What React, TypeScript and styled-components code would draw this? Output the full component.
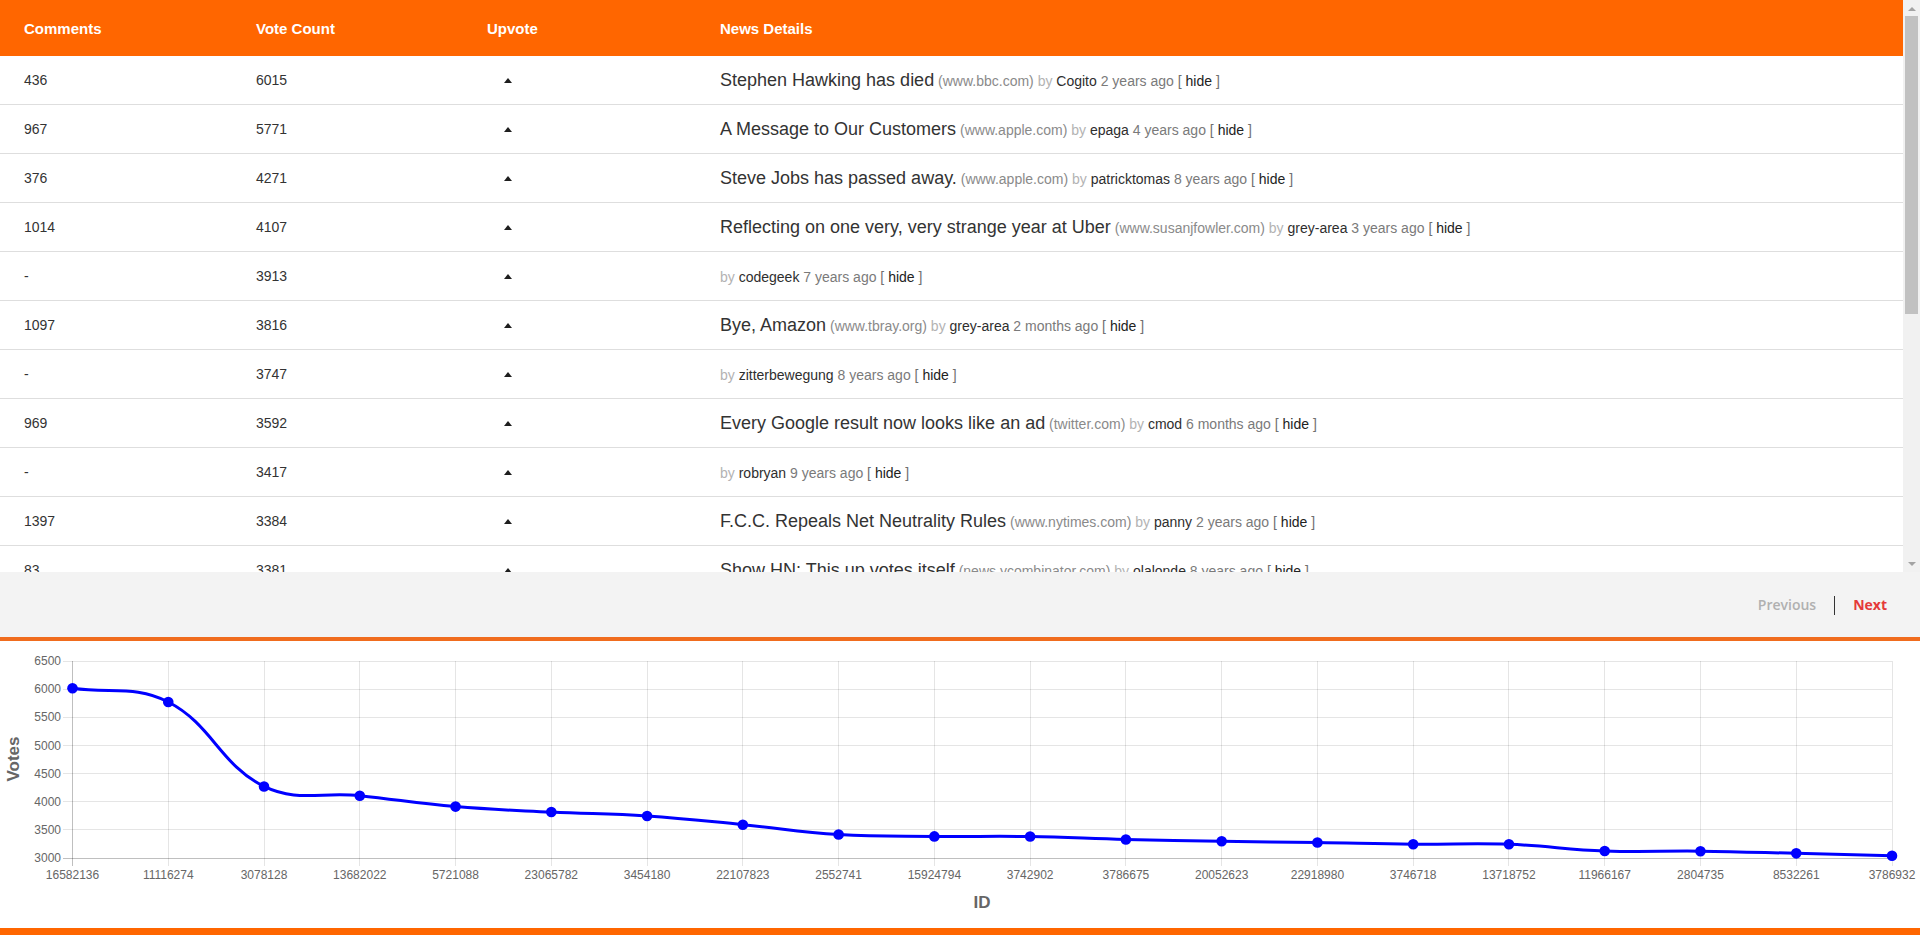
import React, { useState } from "react";
import styled, { createGlobalStyle } from "styled-components";

const GlobalStyle = createGlobalStyle`
  html, body { margin: 0; padding: 0; background: #ffffff; }
  body {
    font-family: "Liberation Sans", Arial, Helvetica, sans-serif;
    overflow: hidden;
  }
  * { box-sizing: border-box; }
`;

type Story = {
  id: number;
  comments: string;
  votes: number;
  title?: string;
  site?: string;
  user: string;
  age: string;
};

const stories: Story[] = [
  { id: 16582136, comments: "436", votes: 6015, title: "Stephen Hawking has died", site: "www.bbc.com", user: "Cogito", age: "2 years ago" },
  { id: 11116274, comments: "967", votes: 5771, title: "A Message to Our Customers", site: "www.apple.com", user: "epaga", age: "4 years ago" },
  { id: 3078128, comments: "376", votes: 4271, title: "Steve Jobs has passed away.", site: "www.apple.com", user: "patricktomas", age: "8 years ago" },
  { id: 13682022, comments: "1014", votes: 4107, title: "Reflecting on one very, very strange year at Uber", site: "www.susanjfowler.com", user: "grey-area", age: "3 years ago" },
  { id: 5721088, comments: "-", votes: 3913, user: "codegeek", age: "7 years ago" },
  { id: 23065782, comments: "1097", votes: 3816, title: "Bye, Amazon", site: "www.tbray.org", user: "grey-area", age: "2 months ago" },
  { id: 3454180, comments: "-", votes: 3747, user: "zitterbewegung", age: "8 years ago" },
  { id: 22107823, comments: "969", votes: 3592, title: "Every Google result now looks like an ad", site: "twitter.com", user: "cmod", age: "6 months ago" },
  { id: 2552741, comments: "-", votes: 3417, user: "robryan", age: "9 years ago" },
  { id: 15924794, comments: "1397", votes: 3384, title: "F.C.C. Repeals Net Neutrality Rules", site: "www.nytimes.com", user: "panny", age: "2 years ago" },
  { id: 3742902, comments: "83", votes: 3381, title: "Show HN: This up votes itself", site: "news.ycombinator.com", user: "olalonde", age: "8 years ago" },
  { id: 3786675, comments: "-", votes: 3328, user: "kogir", age: "8 years ago" },
  { id: 20052623, comments: "1143", votes: 3297, title: "Mozilla is redefining the browser", site: "www.mozilla.org", user: "jrepinc", age: "1 year ago" },
  { id: 22918980, comments: "890", votes: 3275, title: "Apple’s new privacy labels", site: "www.apple.com", user: "mpweiher", age: "9 months ago" },
  { id: 3746718, comments: "412", votes: 3244, title: "Apple is now the world’s most valuable company", site: "www.bbc.co.uk", user: "ssclafani", age: "8 years ago" },
  { id: 13718752, comments: "705", votes: 3243, title: "Keep the Internet open", site: "www.google.com", user: "jdpigeon", age: "3 years ago" },
  { id: 11966167, comments: "1015", votes: 3125, title: "Why I’m leaving Google", site: "medium.com", user: "ingve", age: "4 years ago" },
  { id: 2804735, comments: "-", votes: 3121, user: "dhouston", age: "9 years ago" },
  { id: 8532261, comments: "632", votes: 3083, title: "The Web We Lost", site: "www.anildash.com", user: "geekfactor", age: "5 years ago" },
  { id: 3786932, comments: "-", votes: 3040, user: "ColinWright", age: "8 years ago" },
];

/* ---------- layout ---------- */

const VIEW_H = 572;
const HEADER_H = 56;
const ROW_H = 49;
const BUTTON_H = 16;
const CONTENT_H = HEADER_H + ROW_H * stories.length;

const Page = styled.div`
  display: flex;
  flex-direction: column;
  width: 1920px;
  height: 935px;
`;

const TableArea = styled.div`
  flex: none;
  height: ${VIEW_H}px;
  display: flex;
`;

const TableViewport = styled.div`
  flex: 1;
  min-width: 0;
  overflow-y: auto;
  overflow-x: hidden;
  scrollbar-width: none;
  background: #ffffff;
  &::-webkit-scrollbar {
    display: none;
  }
`;

const ScrollRail = styled.div`
  flex: none;
  width: 17px;
  display: flex;
  flex-direction: column;
  background: #f1f1f1;
`;

const RailButton = styled.div<{ $dir: "up" | "down" }>`
  flex: none;
  height: ${BUTTON_H}px;
  display: flex;
  justify-content: center;
  align-items: center;
  padding-left: 1px;

  &::before {
    content: "";
    width: 0;
    height: 0;
    border-left: 4px solid transparent;
    border-right: 4px solid transparent;
    ${(p) =>
      p.$dir === "up"
        ? "border-bottom: 4px solid #a3a3a3; margin-top: 1px;"
        : "border-top: 4px solid #a3a3a3; margin-bottom: 1px;"}
  }
`;

const RailTrack = styled.div`
  flex: 1;
  position: relative;
  padding: 0 2px;
`;

const RailThumb = styled.div`
  position: absolute;
  left: 2px;
  right: 2px;
  background: #c1c1c1;
`;

const columns = "232px 231px 233px 1fr";

const HeaderRow = styled.div`
  display: grid;
  grid-template-columns: ${columns};
  height: ${HEADER_H}px;
  background: #ff6600;
`;

const HeaderCell = styled.div`
  display: flex;
  align-items: center;
  padding-left: 24px;
  color: #ffffff;
  font-weight: 700;
  font-size: 15px;
  white-space: nowrap;
`;

const Row = styled.div`
  display: grid;
  grid-template-columns: ${columns};
  height: ${ROW_H}px;
  border-bottom: 1px solid #dedede;
  background: #ffffff;
`;

const Cell = styled.div`
  display: flex;
  align-items: center;
  padding-left: 24px;
  font-size: 14px;
  color: #333333;
  white-space: nowrap;
  overflow: hidden;
`;

const UpvoteArrow = styled.span`
  display: block;
  width: 0;
  height: 0;
  margin-left: 17px;
  margin-top: 1px;
  border-left: 4px solid transparent;
  border-right: 4px solid transparent;
  border-bottom: 5px solid #1e1e1e;
`;

const NewsLine = styled.span`
  display: block;
  white-space: nowrap;
  font-size: 14px;
  margin-top: 1px;
`;

const Title = styled.span`
  font-size: 18px;
  color: #333333;
`;

const Meta = styled.span<{ $tone: "site" | "by" | "user" | "age" | "bracket" | "link" }>`
  font-size: 14px;
  color: ${(p) =>
    p.$tone === "site"
      ? "#8a8a8a"
      : p.$tone === "by"
      ? "#b3b3b3"
      : p.$tone === "user"
      ? "#2e2e2e"
      : p.$tone === "age"
      ? "#7a7a7a"
      : p.$tone === "bracket"
      ? "#6f6f6f"
      : "#222222"};
`;

const Pager = styled.div`
  flex: none;
  height: 65px;
  background: #f3f3f3;
  display: flex;
  align-items: center;
  justify-content: flex-end;
  padding-right: 33px;
  font-family: "Open Sans", "Liberation Sans", Arial, sans-serif;
  font-size: 14px;
  font-weight: 600;
`;

const PagerLink = styled.span<{ $enabled: boolean }>`
  color: ${(p) => (p.$enabled ? "#e53a3a" : "#b0b0b0")};
  font-weight: ${(p) => (p.$enabled ? 700 : 600)};
  cursor: ${(p) => (p.$enabled ? "pointer" : "default")};
`;

const PagerDivider = styled.span`
  width: 1px;
  height: 19px;
  margin: 2px 18px 0 18px;
  background: #333333;
`;

const ChartSection = styled.div`
  flex: none;
  height: 291px;
  border-top: 4px solid #f06c1e;
  background: #ffffff;
`;

const ChartSvg = styled.svg`
  display: block;
`;

const TickText = styled.text`
  font-family: "Liberation Sans", Arial, Helvetica, sans-serif;
  font-size: 12px;
  fill: #666666;
`;

const AxisTitle = styled.text`
  font-family: "Liberation Sans", Arial, Helvetica, sans-serif;
  font-size: 17px;
  font-weight: 700;
  fill: #666666;
`;

const BottomBar = styled.div`
  flex: none;
  height: 7px;
  background: #ff6600;
`;

/* ---------- chart ---------- */

const PLOT_L = 72.5;
const PLOT_R = 1892;
const PLOT_T = 20;
const PLOT_B = 217;
const Y_MIN = 3000;
const Y_MAX = 6500;

type Pt = { x: number; y: number };

function splineCurve(prev: Pt, cur: Pt, next: Pt, t: number) {
  const d01 = Math.hypot(cur.x - prev.x, cur.y - prev.y);
  const d12 = Math.hypot(next.x - cur.x, next.y - cur.y);
  let s01 = d01 / (d01 + d12);
  let s12 = d12 / (d01 + d12);
  if (isNaN(s01)) s01 = 0;
  if (isNaN(s12)) s12 = 0;
  const fa = t * s01;
  const fb = t * s12;
  return {
    previous: { x: cur.x - fa * (next.x - prev.x), y: cur.y - fa * (next.y - prev.y) },
    next: { x: cur.x + fb * (next.x - prev.x), y: cur.y + fb * (next.y - prev.y) },
  };
}

const clampY = (y: number) => Math.min(PLOT_B, Math.max(PLOT_T, y));

function VotesChart({ data }: { data: Story[] }) {
  const n = data.length;
  const xFor = (i: number) => PLOT_L + (i * (PLOT_R - PLOT_L)) / (n - 1);
  const yFor = (v: number) => PLOT_B - ((v - Y_MIN) / (Y_MAX - Y_MIN)) * (PLOT_B - PLOT_T);
  const pts: Pt[] = data.map((d, i) => ({ x: xFor(i), y: yFor(d.votes) }));
  const ctrl = pts.map((p, i) => splineCurve(pts[i - 1] || p, p, pts[i + 1] || p, 0.4));
  let path = `M ${pts[0].x} ${pts[0].y}`;
  for (let i = 1; i < n; i++) {
    const a = ctrl[i - 1].next;
    const b = ctrl[i].previous;
    path += ` C ${a.x} ${clampY(a.y)} ${b.x} ${clampY(b.y)} ${pts[i].x} ${pts[i].y}`;
  }
  const yTicks = [6500, 6000, 5500, 5000, 4500, 4000, 3500, 3000];
  const crisp = (v: number) => Math.round(v - 0.5) + 0.5;

  return (
    <ChartSvg width={1920} height={287} viewBox="0 0 1920 287">
      {yTicks.map((v) => {
        const y = crisp(yFor(v));
        const isAxis = v === Y_MIN;
        return (
          <g key={v}>
            <line
              x1={63}
              x2={PLOT_R}
              y1={y}
              y2={y}
              stroke={isAxis ? "rgba(0,0,0,0.25)" : "rgba(0,0,0,0.1)"}
              strokeWidth={1}
            />
            <TickText x={61} y={yFor(v) + 1} textAnchor="end" dominantBaseline="middle">
              {v}
            </TickText>
          </g>
        );
      })}
      {data.map((d, i) => {
        const x = crisp(xFor(i));
        return (
          <g key={d.id}>
            <line
              x1={x}
              x2={x}
              y1={PLOT_T}
              y2={PLOT_B + 8}
              stroke={i === 0 ? "rgba(0,0,0,0.25)" : "rgba(0,0,0,0.1)"}
              strokeWidth={1}
            />
            <TickText x={xFor(i)} y={235} textAnchor="middle" dominantBaseline="middle">
              {d.id}
            </TickText>
          </g>
        );
      })}
      <path d={path} fill="none" stroke="#0000ff" strokeWidth={3} strokeLinejoin="round" />
      {pts.map((p, i) => (
        <circle key={i} cx={p.x} cy={p.y} r={5.3} fill="#0000ff" />
      ))}
      <AxisTitle x={982} y={263} textAnchor="middle" dominantBaseline="middle">
        ID
      </AxisTitle>
      <AxisTitle
        x={15}
        y={118}
        textAnchor="middle"
        dominantBaseline="middle"
        transform="rotate(-90 15 118)"
      >
        Votes
      </AxisTitle>
    </ChartSvg>
  );
}

/* ---------- table ---------- */

function NewsDetails({ s }: { s: Story }) {
  return (
    <NewsLine>
      {s.title && (
        <>
          <Title>{s.title}</Title> <Meta $tone="site">({s.site})</Meta>{" "}
        </>
      )}
      <Meta $tone="by">by</Meta> <Meta $tone="user">{s.user}</Meta>{" "}
      <Meta $tone="age">{s.age}</Meta> <Meta $tone="bracket">[</Meta>{" "}
      <Meta $tone="link">hide</Meta> <Meta $tone="bracket">]</Meta>
    </NewsLine>
  );
}

function StoriesTable() {
  const [scrollTop, setScrollTop] = useState(0);
  const trackLen = VIEW_H - BUTTON_H * 2;
  const thumbLen = Math.round((trackLen * VIEW_H) / CONTENT_H);
  const maxScroll = CONTENT_H - VIEW_H;
  const thumbTop = maxScroll > 0 ? ((trackLen - thumbLen) * scrollTop) / maxScroll : 0;

  return (
    <TableArea>
      <TableViewport onScroll={(e) => setScrollTop(e.currentTarget.scrollTop)}>
        <HeaderRow>
          <HeaderCell>Comments</HeaderCell>
          <HeaderCell>Vote Count</HeaderCell>
          <HeaderCell>Upvote</HeaderCell>
          <HeaderCell>News Details</HeaderCell>
        </HeaderRow>
        {stories.map((s) => (
          <Row key={s.id}>
            <Cell>{s.comments}</Cell>
            <Cell>{s.votes}</Cell>
            <Cell>
              <UpvoteArrow />
            </Cell>
            <Cell>
              <NewsDetails s={s} />
            </Cell>
          </Row>
        ))}
      </TableViewport>
      <ScrollRail>
        <RailButton $dir="up" />
        <RailTrack>
          <RailThumb style={{ top: thumbTop, height: thumbLen }} />
        </RailTrack>
        <RailButton $dir="down" />
      </ScrollRail>
    </TableArea>
  );
}

export default function App() {
  return (
    <>
      <GlobalStyle />
      <Page>
        <StoriesTable />
        <Pager>
          <PagerLink $enabled={false}>Previous</PagerLink>
          <PagerDivider />
          <PagerLink $enabled={true}>Next</PagerLink>
        </Pager>
        <ChartSection>
          <VotesChart data={stories} />
        </ChartSection>
        <BottomBar />
      </Page>
    </>
  );
}
